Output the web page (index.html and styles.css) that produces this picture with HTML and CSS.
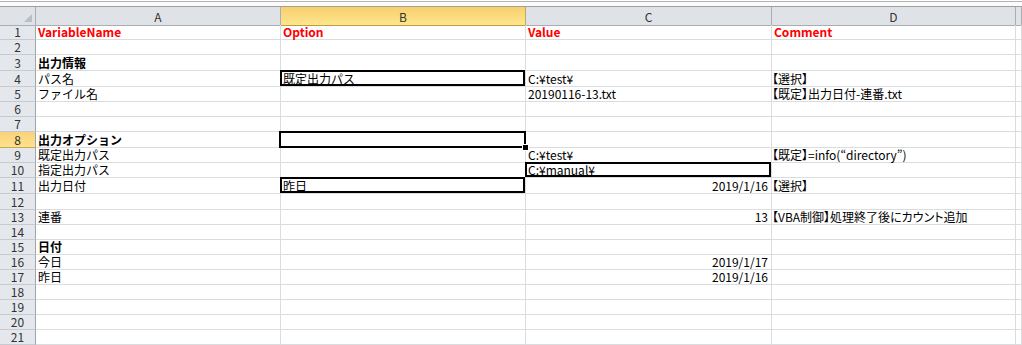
FILE: index.html
```html
<!DOCTYPE html>
<html lang="ja">
<head>
    <meta charset="UTF-8">
    <title>VariableList</title>
    <link rel="stylesheet" href="styles.css">
</head>
<body>
    <div class="formula"></div>

    <div class="row head">
        <div class="corner"><span class="tri"></span></div>
        <div class="ch">A</div>
        <div class="ch sel">B</div>
        <div class="ch">C</div>
        <div class="ch">D</div>
        <div class="ch"></div>
    </div>

    <div class="row">
        <div class="rh">1</div>
        <div class="c red">VariableName</div>
        <div class="c red">Option</div>
        <div class="c red">Value</div>
        <div class="c red">Comment</div>
        <div class="c"></div>
    </div>
    <div class="row">
        <div class="rh">2</div>
        <div class="c"></div><div class="c"></div><div class="c"></div><div class="c"></div><div class="c"></div>
    </div>
    <div class="row tall">
        <div class="rh">3</div>
        <div class="c bold">出力情報</div>
        <div class="c"></div><div class="c"></div><div class="c"></div><div class="c"></div>
    </div>
    <div class="row tall">
        <div class="rh">4</div>
        <div class="c">パス名</div>
        <div class="c boxed">既定出力パス</div>
        <div class="c">C:¥test¥</div>
        <div class="c cm">【選択】</div>
        <div class="c"></div>
    </div>
    <div class="row">
        <div class="rh">5</div>
        <div class="c">ファイル名</div>
        <div class="c"></div>
        <div class="c">20190116-13.txt</div>
        <div class="c cm">【既定】出力日付-連番.txt</div>
        <div class="c"></div>
    </div>
    <div class="row">
        <div class="rh">6</div>
        <div class="c"></div><div class="c"></div><div class="c"></div><div class="c"></div><div class="c"></div>
    </div>
    <div class="row">
        <div class="rh">7</div>
        <div class="c"></div><div class="c"></div><div class="c"></div><div class="c"></div><div class="c"></div>
    </div>
    <div class="row tall">
        <div class="rh sel">8</div>
        <div class="c bold">出力オプション</div>
        <div class="c active"><span class="handle"></span></div>
        <div class="c"></div><div class="c"></div><div class="c"></div>
    </div>
    <div class="row">
        <div class="rh">9</div>
        <div class="c">既定出力パス</div>
        <div class="c"></div>
        <div class="c">C:¥test¥</div>
        <div class="c cm">【既定】=info(“directory”)</div>
        <div class="c"></div>
    </div>
    <div class="row">
        <div class="rh">10</div>
        <div class="c">指定出力パス</div>
        <div class="c"></div>
        <div class="c boxed">C:¥manual¥</div>
        <div class="c"></div>
        <div class="c"></div>
    </div>
    <div class="row tall">
        <div class="rh">11</div>
        <div class="c">出力日付</div>
        <div class="c boxed">昨日</div>
        <div class="c num">2019/1/16</div>
        <div class="c cm">【選択】</div>
        <div class="c"></div>
    </div>
    <div class="row tall">
        <div class="rh">12</div>
        <div class="c"></div><div class="c"></div><div class="c"></div><div class="c"></div><div class="c"></div>
    </div>
    <div class="row">
        <div class="rh">13</div>
        <div class="c">連番</div>
        <div class="c"></div>
        <div class="c num">13</div>
        <div class="c cm">【VBA制御】処理終了後にカウント追加</div>
        <div class="c"></div>
    </div>
    <div class="row">
        <div class="rh">14</div>
        <div class="c"></div><div class="c"></div><div class="c"></div><div class="c"></div><div class="c"></div>
    </div>
    <div class="row">
        <div class="rh">15</div>
        <div class="c bold">日付</div>
        <div class="c"></div><div class="c"></div><div class="c"></div><div class="c"></div>
    </div>
    <div class="row">
        <div class="rh">16</div>
        <div class="c">今日</div>
        <div class="c"></div>
        <div class="c num">2019/1/17</div>
        <div class="c"></div><div class="c"></div>
    </div>
    <div class="row">
        <div class="rh">17</div>
        <div class="c">昨日</div>
        <div class="c"></div>
        <div class="c num">2019/1/16</div>
        <div class="c"></div><div class="c"></div>
    </div>
    <div class="row">
        <div class="rh">18</div>
        <div class="c"></div><div class="c"></div><div class="c"></div><div class="c"></div><div class="c"></div>
    </div>
    <div class="row">
        <div class="rh">19</div>
        <div class="c"></div><div class="c"></div><div class="c"></div><div class="c"></div><div class="c"></div>
    </div>
    <div class="row">
        <div class="rh">20</div>
        <div class="c"></div><div class="c"></div><div class="c"></div><div class="c"></div><div class="c"></div>
    </div>
    <div class="row">
        <div class="rh">21</div>
        <div class="c"></div><div class="c"></div><div class="c"></div><div class="c"></div><div class="c"></div>
    </div>
</body>
</html>
```

FILE: styles.css
```css
* {
    box-sizing: border-box;
}
body {
    margin: 0;
    background-color: #fff;
    font-family: "Noto Sans CJK JP", sans-serif;
    font-size: 12px;
    color: #000;
    overflow: hidden;
}
.formula {
    height: 6px;
    margin-top: 1px;
    border-top: 1px solid #b4b4b4;
    border-bottom: 1px solid #a0a0a0;
    background-color: #fbfbfb;
}
.row {
    display: grid;
    grid-template-columns: 36px 245px 245px 246px 244px 1fr;
    height: 15px;
}
.row.tall {
    height: 16px;
}
.row.head {
    height: 18px;
}

/* column headers */
.corner {
    position: relative;
    background-color: #dfe3e8;
    border-right: 1px solid #a9aeb5;
    border-bottom: 1px solid #a9aeb5;
}
.tri {
    position: absolute;
    right: 3px;
    bottom: 3px;
    width: 8px;
    height: 8px;
    background-color: #b9bec5;
    clip-path: polygon(100% 0, 100% 100%, 0 100%);
}
.ch {
    display: flex;
    align-items: center;
    justify-content: center;
    background-color: #dfe3e8;
    border-right: 1px solid #a9aeb5;
    border-bottom: 1px solid #a9aeb5;
    color: #333;
    padding-top: 1px;
}
.ch.sel {
    background: linear-gradient(#f8cf6d, #fde68e);
    border-bottom-color: #c29b3c;
    border-right-color: #c9a65a;
}

/* row headers */
.rh {
    display: flex;
    align-items: flex-end;
    justify-content: center;
    background-color: #e4e8ed;
    border-right: 1px solid #a0a6ad;
    border-bottom: 1px solid #c6cbd1;
    color: #333;
    line-height: 14px;
}
.rh.sel {
    background: linear-gradient(#f9d27a, #fde28a);
    border-bottom-color: #c9a65a;
}

/* cells */
.c {
    position: relative;
    display: flex;
    align-items: flex-end;
    padding: 0 2px;
    border-right: 1px solid #dadcdd;
    border-bottom: 1px solid #dadcdd;
    white-space: nowrap;
    line-height: 14px;
}
.c.red {
    color: #f00;
    font-weight: bold;
}
.c.bold {
    font-weight: bold;
}
.c.cm {
    padding-left: 0;
    font-feature-settings: "palt";
}
.c.num {
    justify-content: flex-end;
    padding-right: 3px;
}
.c.boxed::after {
    content: "";
    position: absolute;
    left: -1px;
    top: -1px;
    right: 0;
    bottom: 0;
    border: 2px solid #000;
}
.c.active::after {
    content: "";
    position: absolute;
    left: -2px;
    top: -1px;
    right: -1px;
    bottom: -1px;
    border: 2px solid #000;
}
.handle {
    position: absolute;
    right: -3px;
    bottom: -3px;
    width: 5px;
    height: 5px;
    background-color: #000;
    outline: 1px solid #fff;
    z-index: 1;
}
```
